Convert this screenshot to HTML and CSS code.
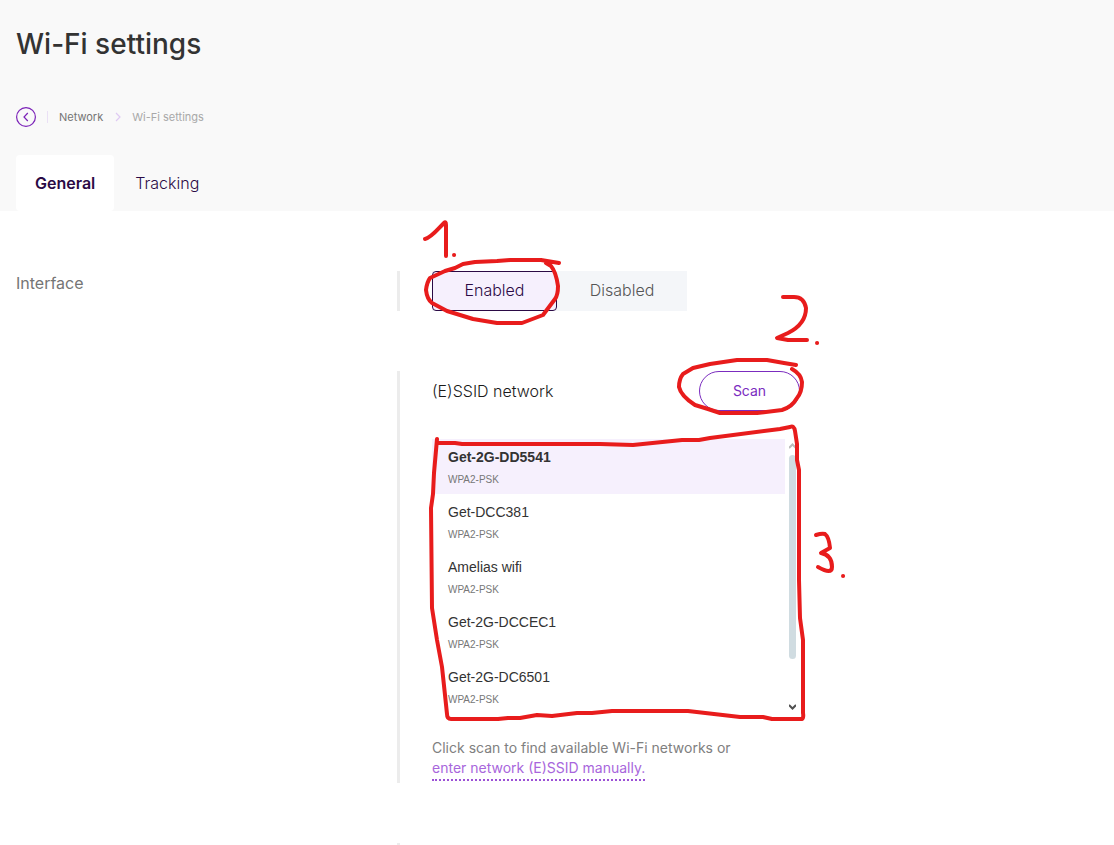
FILE: index.html
```html
<!DOCTYPE html>
<html lang="en">
<head>
<meta charset="utf-8">
<title>Wi-Fi settings</title>
<link rel="stylesheet" href="styles.css">
</head>
<body>
<div class="page">
  <header class="header">
    <h1 class="title">Wi-Fi settings</h1>
    <nav class="crumbs" aria-label="Breadcrumb">
      <button class="back" type="button" aria-label="Back">
        <svg width="20" height="20" viewBox="0 0 20 20"><circle cx="10" cy="10" r="9.4"/><path d="M11.8 6 8 10l3.800 4"/></svg>
      </button>
      <span class="divider"></span>
      <a class="crumb" href="#network">Network</a>
      <svg class="chevron" width="6" height="10" viewBox="0 0 6 10"><path d="M1 1l4 4-4 4"/></svg>
      <span class="crumb-current">Wi-Fi settings</span>
    </nav>
    <nav class="tabs" aria-label="Sections">
      <a class="tab tab-active" href="#general">General</a>
      <a class="tab" href="#tracking">Tracking</a>
    </nav>
  </header>

  <main class="main">
    <section class="row">
      <h2 class="row-label">Interface</h2>
      <div class="row-body">
        <div class="toggle">
          <button class="toggle-option toggle-on" type="button" aria-pressed="true">Enabled</button>
          <button class="toggle-option" type="button" aria-pressed="false">Disabled</button>
        </div>
      </div>
    </section>

    <section class="row">
      <div></div>
      <div class="row-body">
        <div class="scan-bar">
          <span>(E)SSID network</span>
          <button class="scan" type="button">Scan</button>
        </div>
        <div class="networks">
          <ul class="network-list">
            <li class="network network-selected"><span class="ssid">Get-2G-DD5541</span><span class="security">WPA2-PSK</span></li>
            <li class="network"><span class="ssid">Get-DCC381</span><span class="security">WPA2-PSK</span></li>
            <li class="network"><span class="ssid">Amelias wifi</span><span class="security">WPA2-PSK</span></li>
            <li class="network"><span class="ssid">Get-2G-DCCEC1</span><span class="security">WPA2-PSK</span></li>
            <li class="network"><span class="ssid">Get-2G-DC6501</span><span class="security">WPA2-PSK</span></li>
          </ul>
          <div class="scrollbar" aria-hidden="true">
            <svg class="arrow arrow-up" width="7" height="6" viewBox="0 0 7 6"><path d="M0 5l3.500-3.500L7 5"/></svg>
            <span class="thumb"></span>
            <svg class="arrow" width="7" height="6" viewBox="0 0 7 6"><path d="M0 1l3.500 3.500L7 1"/></svg>
          </div>
        </div>
        <p class="hint">Click scan to find available Wi-Fi networks or <a class="manual" href="#manual">enter network (E)SSID manually.</a></p>
      </div>
    </section>

    <section class="row">
      <div></div>
      <div class="row-body row-next"></div>
    </section>
  </main>

  <svg class="marks" width="860" height="740" viewBox="0 0 860 740" role="img" aria-label="Steps 1, 2 and 3">
    <path d="M425 239C431 238 438 229 444 223Q446 221 446 225V256M454 255h.1"/>
    <path d="M559 263L541 260H510L497 261L475 262L463 264L455 268L445 271L430 278Q427 282 426 290Q427 299 432 303L447 311L473 319L497 323H522L543 315L555 299Q558 295 558 286Q556 272 551 266L546 263"/>
    <path d="M783 297H794Q804 297 806 308Q806 324 788 333L777 338L788 340H807M817 343h.1"/>
    <path d="M796 365L784 363L767 360H737L710 364L693 368L683 374Q679 379 679 387Q681 396 695 405L708 409L720 413H757L782 410Q792 407 797 398Q802 392 802 382Q801 374 792 369"/>
    <path d="M437 439L434 473L433 494L431 508L432 608L437 640L442 667L445 695L447 714Q447 719 451 719H498L508 718H520L537 715L552 716L577 713H592L612 711H688L740 717H763L772 719H801Q804 719 803 713V640L800 618L799 580V470L797 460V444L795 431Q794 425 790 427L780 429L710 438L699 440H682L633 445L600 444H462L455 443H438"/>
    <path d="M816 535Q822 533 825 534Q829 537 830 548L821 553Q832 555 832 567Q832 575 818 567M843 576h.1"/>
  </svg>
</div>
</body>
</html>
```
FILE: styles.css
```css
* {
  box-sizing: border-box;
}

body {
  margin: 0;
  background: #fff;
  color: #1a1a1a;
  font: 300 16px/20px Inter, "Liberation Sans", sans-serif;
}

button {
  font: inherit;
  cursor: pointer;
}

.page {
  position: relative;
  display: flex;
  flex-direction: column;
  height: 100vh;
  overflow: hidden;
}

.header {
  padding: 24px 16px 0;
  background: #f9f9f9;
}

.title {
  margin: 0 0 42px;
  color: #333;
  font-size: 28px;
  font-weight: 500;
  line-height: 41px;
}

.crumbs {
  display: flex;
  align-items: center;
  margin-bottom: 28px;
  font-size: 11px;
  font-weight: 400;
}

.back {
  display: flex;
  padding: 0;
  border: 0;
  background: none;
}

.back svg,
.chevron,
.arrow {
  fill: none;
  stroke: #7b22b8;
  stroke-width: 1.2;
}

.divider {
  width: 1px;
  height: 12px;
  margin: 0 11px;
  background: #eae0f5;
}

.crumb {
  color: #757575;
  text-decoration: none;
}

.chevron {
  margin: 0 11px 0 12px;
  stroke: #dfcaf3;
}

.crumb-current {
  color: #a8a8a8;
}

.tabs {
  display: flex;
  gap: 2px;
}

.tab {
  padding: 18px 19px;
  border-radius: 4px;
  color: #2b0a45;
  text-decoration: none;
}

.tab-active {
  background: #fff;
  font-weight: 600;
}

.main {
  display: flex;
  flex: none;
  flex-direction: column;
  gap: 60px;
  padding: 60px 16px;
}

.row {
  display: grid;
  grid-template-columns: minmax(0, 381px) minmax(0, 1fr);
}

.row-label {
  margin: 2px 0 0;
  color: #757575;
  font-size: 16px;
  font-weight: 400;
}

.row-body {
  padding-left: 32px;
  border-left: 3px solid #ececec;
}

.row-next {
  height: 40px;
}

.toggle {
  display: grid;
  grid-template-columns: 125px 130px;
  width: 255px;
  height: 40px;
  background: #f4f6f9;
}

.toggle-option {
  padding: 0 0 2px;
  border: 1px solid transparent;
  border-radius: 4px;
  background: none;
  color: #555;
  font-weight: 300;
}

.toggle-on {
  border-color: #2b0a45;
  background: #f6f0fd;
  color: #2b0a45;
}

.scan-bar {
  display: flex;
  align-items: center;
  justify-content: space-between;
  max-width: 368px;
  margin-bottom: 28px;
}

.scan {
  width: 101px;
  height: 40px;
  border: 1px solid #7b2cbf;
  border-radius: 20px;
  background: #fff;
  color: #7b2cbf;
  font-size: 14px;
  font-weight: 400;
}

.networks {
  display: flex;
  gap: 4px;
  max-width: 364px;
  font-family: "Liberation Sans", Arial, sans-serif;
}

.network-list {
  flex: 1;
  margin: 0;
  padding: 0;
  list-style: none;
}

.network {
  display: flex;
  flex-direction: column;
  gap: 3px;
  height: 55px;
  padding: 8px 16px;
}

.network-selected {
  background: #f6f0fd;
}

.ssid {
  color: #333;
  font-size: 14px;
  font-weight: 400;
}

.network-selected .ssid {
  font-weight: 700;
}

.security {
  color: #777;
  font-size: 10px;
  font-weight: 400;
}

.scrollbar {
  display: flex;
  flex-direction: column;
  justify-content: space-between;
  width: 7px;
  padding: 4px 0;
}

.arrow {
  stroke: #505050;
  stroke-width: 2;
}

.arrow-up {
  stroke: #bbb;
}

.thumb {
  height: 204px;
  margin-bottom: 40px;
  border-radius: 4px;
  background: #d0dce1;
}

.hint {
  max-width: 310px;
  margin: 24px 0 0;
  padding-bottom: 5px;
  color: #808080;
  font-size: 14px;
  font-weight: 400;
}

.manual {
  padding-bottom: 3px;
  border-bottom: 2px dotted #9c51d6;
  color: #a866dc;
  text-decoration: none;
}

.marks {
  position: absolute;
  top: 0;
  left: 0;
  fill: none;
  stroke: #e81c1c;
  stroke-width: 4;
  stroke-linecap: round;
  stroke-linejoin: round;
  pointer-events: none;
}
```
